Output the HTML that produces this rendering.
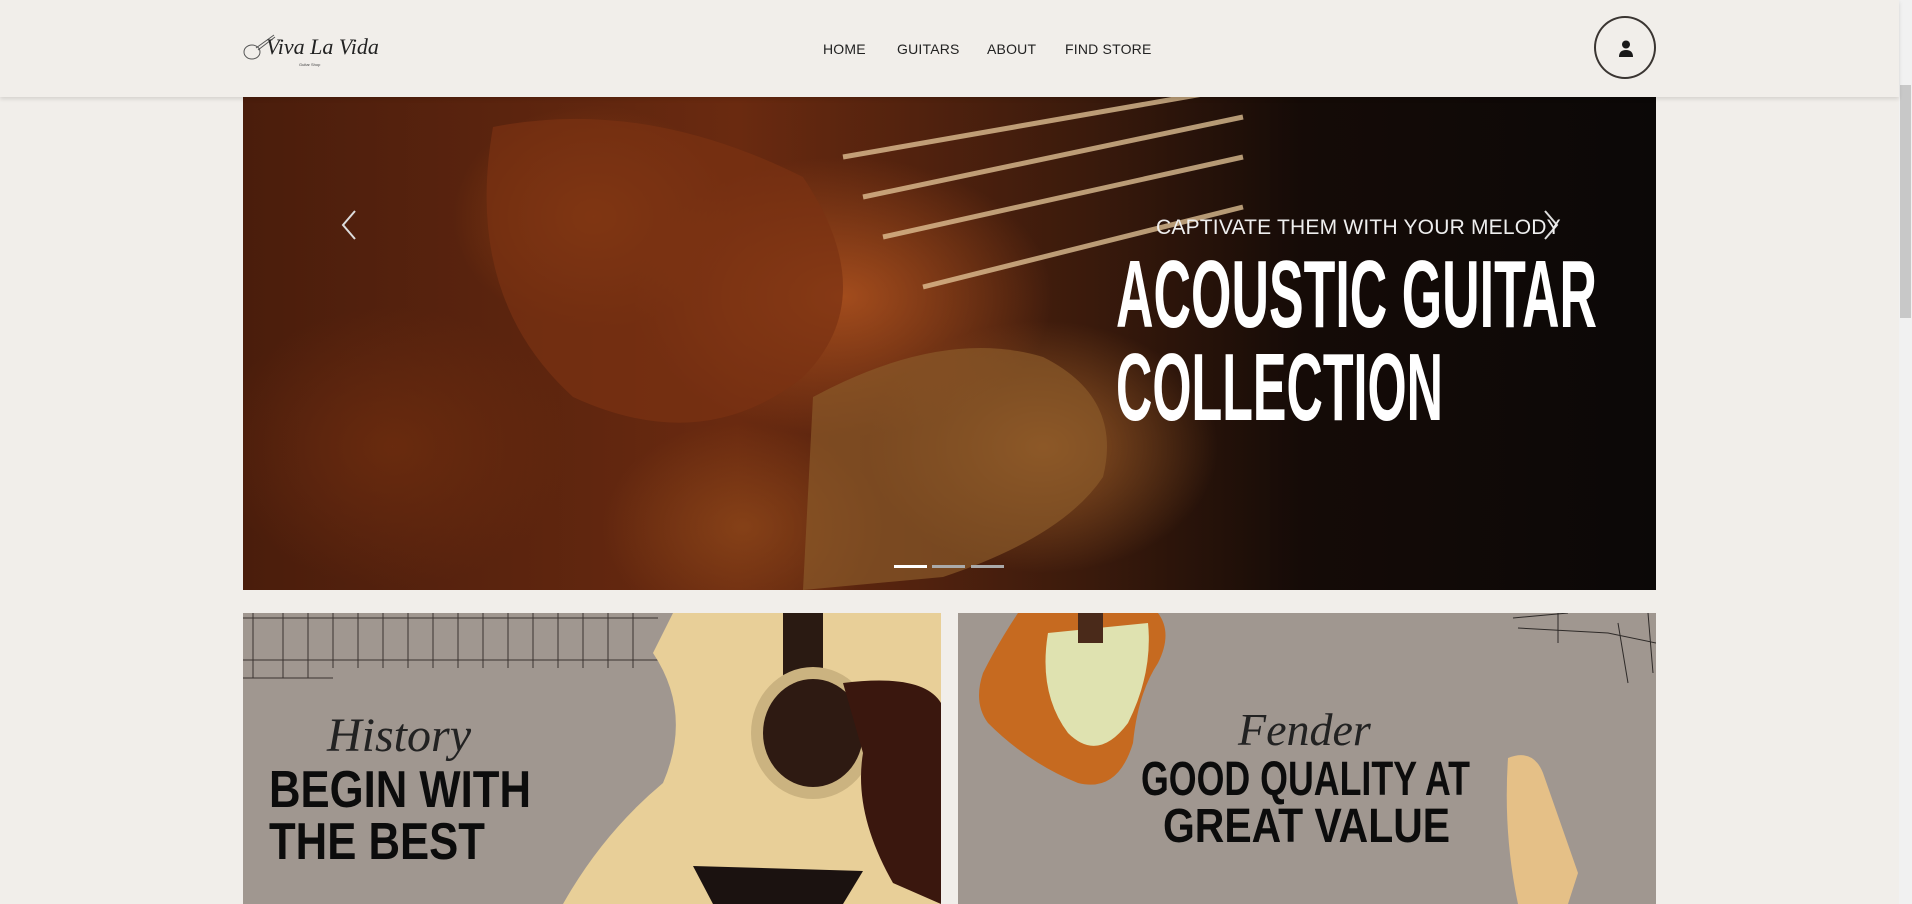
<!DOCTYPE html>
<html><head><meta charset="utf-8">
<style>
*{margin:0;padding:0;box-sizing:border-box}
html,body{width:1912px;height:904px;overflow:hidden;background:#f1eeea;font-family:"Liberation Sans",sans-serif}
.hdr{position:absolute;left:0;top:0;width:1899px;height:97px;background:#f1eeea;box-shadow:0 2px 4px rgba(0,0,0,.12);z-index:5}
.nav{position:absolute;top:41px;font-size:14px;color:#222;letter-spacing:.2px}
.user{position:absolute;left:1594px;top:16px;width:62px;height:63px;border:2px solid #3a3532;border-radius:50%}
.sb{position:absolute;left:1899px;top:0;width:13px;height:904px;background:#f1f1f1}
.thumb{position:absolute;left:1900px;top:85px;width:11px;height:233px;background:#c8c8c8}
.hero{position:absolute;left:243px;top:97px;width:1413px;height:493px;overflow:hidden;
background:
radial-gradient(ellipse 300px 200px at 600px 200px,rgba(170,80,30,.9),transparent 70%),
radial-gradient(ellipse 250px 180px at 800px 350px,rgba(160,95,40,.85),transparent 70%),
radial-gradient(ellipse 200px 160px at 350px 120px,rgba(150,70,20,.8),transparent 70%),
radial-gradient(ellipse 250px 200px at 150px 350px,rgba(110,45,15,.8),transparent 70%),
radial-gradient(ellipse 200px 150px at 500px 430px,rgba(140,70,25,.8),transparent 70%),
linear-gradient(90deg,#4a1d0c 0%,#6a2a10 35%,#3a1a0c 60%,#150b07 75%,#0b0807 100%)}
.card{position:absolute;top:613px;width:698px;height:291px;background:#a09790;overflow:hidden}
.script{position:absolute;font-family:"Liberation Serif",serif;font-style:italic;color:#222}
</style></head><body>
<div class="hdr">
 <svg style="position:absolute;left:242px;top:32px" width="34" height="32" viewBox="0 0 34 32"><g fill="none" stroke="#555" stroke-width="1"><ellipse cx="10" cy="20" rx="8" ry="7"/><path d="M14 16 L32 3 M16 18 L33 5"/></g></svg>
 <div style="position:absolute;left:266px;top:34px;font-family:'Liberation Serif',serif;font-style:italic;font-size:22px;color:#222">Viva La Vida</div>
 <div style="position:absolute;left:299px;top:62px;font-size:4px;color:#444">Guitar Shop</div>
 <div class="nav" style="left:823px">HOME</div>
 <div class="nav" style="left:897px">GUITARS</div>
 <div class="nav" style="left:987px">ABOUT</div>
 <div class="nav" style="left:1065px">FIND STORE</div>
 <div class="user"><svg style="position:absolute;left:22px;top:22px" width="16" height="17" viewBox="0 0 16 17"><circle cx="8" cy="4.5" r="4" fill="#1a1a1a"/><path d="M1 17 Q1 10 8 10 Q15 10 15 17Z" fill="#1a1a1a"/></svg></div>
</div>
<div class="sb"></div><div class="thumb"></div>
<div class="hero">
 <svg width="1413" height="493" style="position:absolute;left:0;top:0">
  <g stroke="#e7c89a" stroke-width="5" opacity=".75"><line x1="600" y1="60" x2="1000" y2="-10"/><line x1="620" y1="100" x2="1000" y2="20"/><line x1="640" y1="140" x2="1000" y2="60"/><line x1="680" y1="190" x2="1000" y2="110"/></g>
  <path d="M570 300 Q700 230 800 260 Q880 300 860 380 Q820 440 700 480 L560 493 Z" fill="#8a5a2a" opacity=".7"/>
  <path d="M250 30 Q400 0 560 80 Q640 200 560 280 Q460 360 330 300 Q220 200 250 30Z" fill="#7a3212" opacity=".7"/>
 </svg>
 <svg style="position:absolute;left:96px;top:112px" width="20" height="32"><path d="M16 2 L4 16 L16 30" stroke="#ddd" stroke-width="2" fill="none"/></svg>
 <svg style="position:absolute;left:1298px;top:112px" width="20" height="32"><path d="M4 2 L16 16 L4 30" stroke="#ddd" stroke-width="2" fill="none"/></svg>
 <div style="position:absolute;left:913px;top:119px;font-size:21px;color:#eee;letter-spacing:.2px">CAPTIVATE THEM WITH YOUR MELODY</div>
 <svg style="position:absolute;left:870px;top:135px" width="520" height="200"><g font-family="Liberation Sans" font-weight="bold" fill="#fff"><text x="3" y="95" font-size="96" textLength="481" lengthAdjust="spacingAndGlyphs">ACOUSTIC GUITAR</text><text x="3" y="188" font-size="96" textLength="327" lengthAdjust="spacingAndGlyphs">COLLECTION</text></g></svg>
 <div style="position:absolute;left:651px;top:468px;width:33px;height:3px;background:#fff"></div>
 <div style="position:absolute;left:689px;top:468px;width:33px;height:3px;background:#aaa"></div>
 <div style="position:absolute;left:728px;top:468px;width:33px;height:3px;background:#aaa"></div>
</div>
<div class="card" style="left:243px">
 <svg width="698" height="291" style="position:absolute;left:0;top:0">
  <g stroke="#3a3330" stroke-width="1"><line x1="0" y1="5" x2="415" y2="5"/><line x1="0" y1="47" x2="415" y2="47"/><line x1="0" y1="65" x2="90" y2="65"/>
  <line x1="10" y1="0" x2="10" y2="65"/><line x1="40" y1="0" x2="40" y2="65"/><line x1="65" y1="0" x2="65" y2="65"/><line x1="90" y1="0" x2="90" y2="55"/><line x1="115" y1="0" x2="115" y2="55"/><line x1="140" y1="0" x2="140" y2="55"/><line x1="165" y1="0" x2="165" y2="55"/><line x1="190" y1="0" x2="190" y2="55"/><line x1="215" y1="0" x2="215" y2="55"/><line x1="240" y1="0" x2="240" y2="55"/><line x1="265" y1="0" x2="265" y2="55"/><line x1="290" y1="0" x2="290" y2="55"/><line x1="315" y1="0" x2="315" y2="55"/><line x1="340" y1="0" x2="340" y2="55"/><line x1="365" y1="0" x2="365" y2="55"/><line x1="390" y1="0" x2="390" y2="55"/></g>
  <path d="M430 0 L698 0 L698 291 L320 291 Q360 220 420 170 Q450 100 410 40 Z" fill="#e8cf98"/>
  <rect x="540" y="0" width="40" height="100" fill="#2a1a12"/>
  <ellipse cx="570" cy="120" rx="62" ry="66" fill="#cbb380"/><ellipse cx="570" cy="120" rx="50" ry="54" fill="#2e1a12"/>
  <path d="M600 70 Q680 60 698 90 L698 291 L650 270 Q610 200 620 140Z" fill="#3a170e"/>
  <path d="M450 253 L620 258 L600 291 L470 291 Z" fill="#1b1210"/>
 </svg>
 <div class="script" style="left:84px;top:95px;font-size:48px">History</div>
 <svg style="position:absolute;left:26px;top:142px" width="260" height="140"><g font-family="Liberation Sans" font-weight="bold" fill="#0c0c0c"><text x="0" y="52" font-size="52" textLength="262" lengthAdjust="spacingAndGlyphs">BEGIN WITH</text><text x="0" y="104" font-size="52" textLength="216" lengthAdjust="spacingAndGlyphs">THE BEST</text></g></svg>
</div>
<div class="card" style="left:958px">
 <svg width="698" height="291" style="position:absolute;left:0;top:0">
  <path d="M60 0 L200 0 Q215 20 200 50 Q180 80 175 130 Q160 180 120 170 Q70 150 30 110 Q15 90 25 60 Q40 30 60 0Z" fill="#c66a20"/>
  <path d="M90 20 L190 10 Q195 60 170 110 Q140 150 110 120 Q80 80 90 20Z" fill="#dfe2b0"/>
  <rect x="120" y="0" width="25" height="30" fill="#4a2a1a"/>
  <path d="M550 145 Q575 135 585 160 L620 260 L610 291 L560 291 Q545 220 550 145Z" fill="#e5c087"/>
  <g stroke="#2e2a28" stroke-width="1" fill="none"><path d="M555 5 L610 0 M560 15 L650 20 L698 30 M600 0 L600 30 M660 10 L670 70 M690 0 L695 60"/></g>
 </svg>
 <div class="script" style="left:280px;top:90px;font-size:46px">Fender</div>
 <svg style="position:absolute;left:180px;top:130px" width="340" height="140"><g font-family="Liberation Sans" font-weight="bold" fill="#0c0c0c"><text x="3" y="52" font-size="48" textLength="329" lengthAdjust="spacingAndGlyphs">GOOD QUALITY AT</text><text x="25" y="99" font-size="48" textLength="287" lengthAdjust="spacingAndGlyphs">GREAT VALUE</text></g></svg>
</div>
</body></html>
